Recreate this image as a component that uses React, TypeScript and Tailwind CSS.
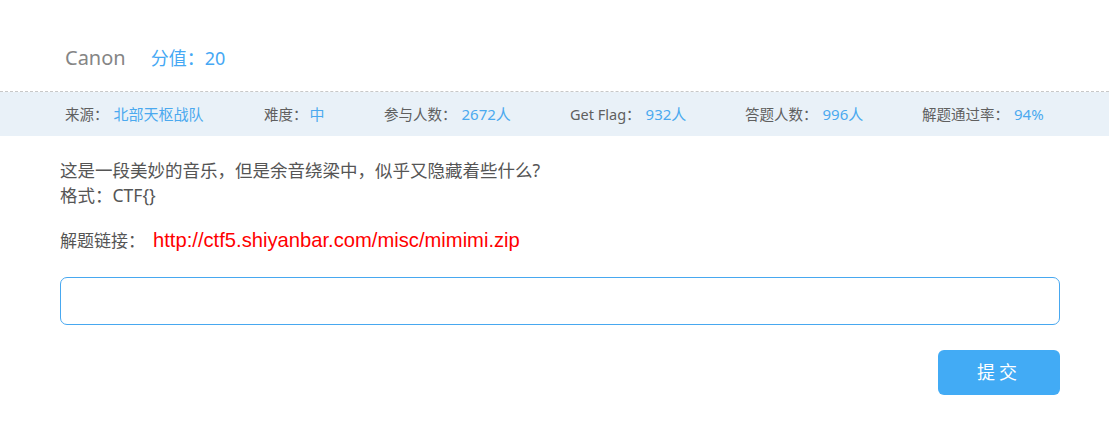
import React from "react";

const font = {
  fontFamily: '"Microsoft YaHei", "Noto Sans", "Noto Sans CJK SC", sans-serif',
};

export default function App() {
  const stats: { label: string; value: string; w: string }[] = [
    { label: "来源：", value: "北部天枢战队", w: "w-[199px]" },
    { label: "难度：", value: "中", w: "w-[120px]" },
    { label: "参与人数：", value: "2672人", w: "w-[186px]" },
    { label: "Get Flag：", value: "932人", w: "w-[175px]" },
    { label: "答题人数：", value: "996人", w: "w-[177px]" },
    { label: "解题通过率：", value: "94%", w: "w-[150px]" },
  ];
  return (
    <div className="w-[1109px] h-[422px] bg-white overflow-hidden" style={font}>
      <div className="h-[92px] border-b border-dashed border-[#c8c8c8] flex items-start pt-[44px] pl-[65px]">
        <span className="text-[20px] leading-[28px] text-[#858585]">Canon</span>
        <span className="ml-[25px] text-[18px] leading-[28px] text-[#45a8f4]">分值：20</span>
      </div>
      <div className="h-[44px] bg-[#e9f1f8] flex items-center pl-[65px] text-[14.5px] leading-[20px]">
        {stats.map((s) => (
          <div key={s.label} className={`${s.w} flex items-center shrink-0`}>
            <span className="text-[#5f5f5f]">{s.label}</span>
            <span className={`${s.value === "中" ? "ml-[2px]" : "ml-[5px]"} text-[#4ba9ef] text-[15px]`}>{s.value}</span>
          </div>
        ))}
      </div>
      <div className="px-[60px] pt-[22px] text-[17.5px] leading-[25px] text-[#555555]">
        <div>这是一段美妙的音乐，但是余音绕梁中，似乎又隐藏着些什么?</div>
        <div>格式：CTF{"{}"}</div>
        <div className="mt-[20px] flex items-baseline">
          <span className="text-[17px]">解题链接：</span>
          <span
            className="ml-[8px] text-[#ff0000] text-[20.2px] leading-[25px]"
            style={{ fontFamily: '"Liberation Sans", Arial, sans-serif' }}
          >
            http://ctf5.shiyanbar.com/misc/mimimi.zip
          </span>
        </div>
        <div className="mt-[24px] w-[1000px] h-[48px] border border-[#48a8f0] rounded-[7px]" />
        <div className="w-[1000px] flex justify-end mt-[25px]">
          <button className="w-[122px] h-[45px] bg-[#42abf5] rounded-[6px] text-white text-[18px] tracking-[4px]">
            提交
          </button>
        </div>
      </div>
    </div>
  );
}
